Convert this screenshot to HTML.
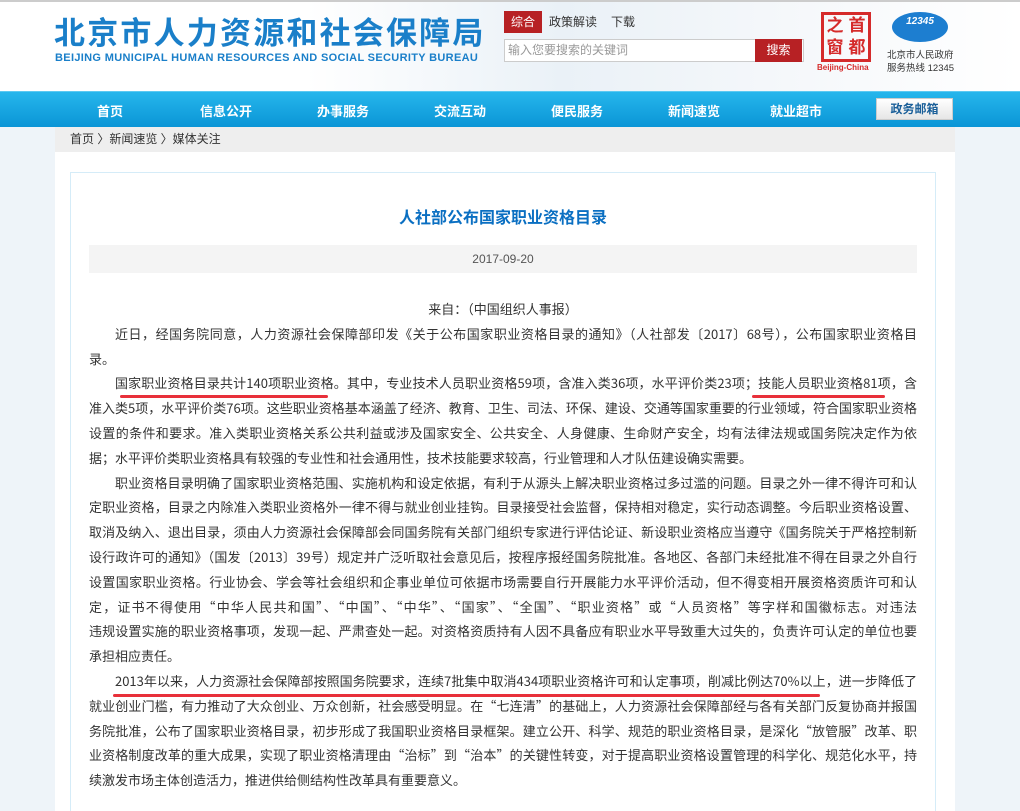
<!DOCTYPE html>
<html><head><meta charset="utf-8">
<style>
*{margin:0;padding:0;box-sizing:border-box}
html,body{width:1020px;height:811px;overflow:hidden}
body{background:#eef4f9;font-family:"Liberation Sans","Noto Sans CJK SC",sans-serif;color:#333;position:relative}
.hdr{height:91px;background:linear-gradient(90deg,#fff 0%,#fff 30%,#eaf1f7 55%,#f4f7fa 75%,#fff 100%);border-top:2px solid #ccc;position:relative}
.logo{position:absolute;left:54px;top:12px;font-size:31px;line-height:34px;font-weight:bold;color:#1a7fc9;letter-spacing:2.2px;font-family:"Noto Sans CJK SC",sans-serif;white-space:nowrap}
.logo-en{position:absolute;left:55px;top:50px;font-size:11px;font-weight:bold;color:#1a7fc9;letter-spacing:0.33px;white-space:nowrap}
.tabs{position:absolute;left:504px;top:9px;font-size:12px;display:flex;align-items:center}
.tabs span{padding:0 7px;height:22px;line-height:22px;color:#333}
.tabs .on{background:#b72124;color:#fff}
.search{position:absolute;left:504px;top:37px;width:300px;height:23px;border:1px solid #ccc;background:#fff;font-size:12px;color:#999;line-height:21px;padding-left:3px}
.sbtn{position:absolute;left:755px;top:37px;width:47px;height:23px;background:#b72124;color:#fff;font-size:12px;text-align:center;line-height:23px}
.bj{position:absolute;left:821px;top:10px;width:50px;height:50px;border:3px solid #d52b2b;color:#d52b2b;font-size:17px;font-weight:bold;display:grid;grid-template-columns:1fr 1fr;text-align:center;line-height:22px}
.bjt{position:absolute;left:817px;top:61px;font-size:8px;color:#d52b2b;font-weight:bold}
.ov{position:absolute;left:892px;top:10px;width:56px;height:30px;border-radius:50%;background:#1d7ed0;color:#fff;font-size:10px;font-style:italic;font-weight:bold;text-align:center;line-height:20px}
.ovt{position:absolute;left:887px;top:47px;font-size:9.5px;color:#333;line-height:13px}
.nav{position:absolute;top:91px;left:0;width:1020px;height:36px;background:linear-gradient(#26b6ec,#0a95d6);border-top:1px solid #5cc9f1}
.nav span{position:absolute;top:9px;color:#fff;font-size:13px;font-weight:bold}
.mail{position:absolute;left:876px;top:98px;width:77px;height:22px;background:linear-gradient(#fff,#e6e6e6);border:1px solid #ccc;color:#1a5f99;font-size:12px;font-weight:bold;text-align:center;line-height:20px}
.wrap{position:absolute;left:55px;top:127px;width:900px;height:684px;background:#fff;overflow:hidden}
.bc{height:25px;background:#eee;font-size:12px;line-height:25px;padding-left:15px;color:#333}
.box{position:absolute;left:15px;top:45px;width:866px;height:640px;border:1px solid #d5ecf8;border-bottom:none}
.title{position:absolute;top:31px;width:100%;text-align:center;color:#0a6fc2;font-size:16px;font-weight:bold}
.date{position:absolute;left:18px;top:72px;width:828px;height:28px;background:#f4f4f4;text-align:center;font-size:12px;line-height:28px;color:#555}
.txt{position:absolute;left:18px;top:124px;width:828px;font-size:13px;line-height:24.8px;font-family:"Noto Sans CJK SC",sans-serif}
.txt div{white-space:nowrap;text-align:justify;text-align-last:justify}
.txt div.i{padding-left:26px}
.txt div.e{text-align-last:left}
.ul{position:absolute;height:3px;background:#e8303a;border-radius:2px}
</style></head><body>
<div class="hdr">
<div class="logo">北京市人力资源和社会保障局</div>
<div class="logo-en">BEIJING MUNICIPAL HUMAN RESOURCES AND SOCIAL SECURITY BUREAU</div>
<div class="tabs"><span class="on">综合</span><span>政策解读</span><span>下载</span></div>
<div class="search">输入您要搜索的关键词</div>
<div class="sbtn">搜索</div>
<div class="bj"><span>之</span><span>首</span><span>窗</span><span>都</span></div>
<div class="bjt">Beijing-China</div>
<div class="ov">12345</div>
<div class="ovt">北京市人民政府<br>服务热线 12345</div>
</div>
<div class="nav">
<span style="left:97px">首页</span><span style="left:200px">信息公开</span><span style="left:317px">办事服务</span><span style="left:434px">交流互动</span><span style="left:551px">便民服务</span><span style="left:668px">新闻速览</span><span style="left:770px">就业超市</span>
</div>
<div class="mail">政务邮箱</div>
<div class="wrap">
<div class="bc">首页 〉新闻速览 〉媒体关注</div>
<div class="box">
<div class="title">人社部公布国家职业资格目录</div>
<div class="date">2017-09-20</div>
<div class="txt">
<div class="e" style="text-align:center;text-align-last:center">来自：（中国组织人事报）</div>
<div class="i">近日，经国务院同意，人力资源社会保障部印发《关于公布国家职业资格目录的通知》（人社部发〔2017〕68号），公布国家职业资格目</div>
<div class="e">录。</div>
<div class="i">国家职业资格目录共计140项职业资格。其中，专业技术人员职业资格59项，含准入类36项，水平评价类23项；技能人员职业资格81项，含</div>
<div>准入类5项，水平评价类76项。这些职业资格基本涵盖了经济、教育、卫生、司法、环保、建设、交通等国家重要的行业领域，符合国家职业资格</div>
<div>设置的条件和要求。准入类职业资格关系公共利益或涉及国家安全、公共安全、人身健康、生命财产安全，均有法律法规或国务院决定作为依</div>
<div class="e">据；水平评价类职业资格具有较强的专业性和社会通用性，技术技能要求较高，行业管理和人才队伍建设确实需要。</div>
<div class="i">职业资格目录明确了国家职业资格范围、实施机构和设定依据，有利于从源头上解决职业资格过多过滥的问题。目录之外一律不得许可和认</div>
<div>定职业资格，目录之内除准入类职业资格外一律不得与就业创业挂钩。目录接受社会监督，保持相对稳定，实行动态调整。今后职业资格设置、</div>
<div>取消及纳入、退出目录，须由人力资源社会保障部会同国务院有关部门组织专家进行评估论证、新设职业资格应当遵守《国务院关于严格控制新</div>
<div>设行政许可的通知》（国发〔2013〕39号）规定并广泛听取社会意见后，按程序报经国务院批准。各地区、各部门未经批准不得在目录之外自行</div>
<div>设置国家职业资格。行业协会、学会等社会组织和企事业单位可依据市场需要自行开展能力水平评价活动，但不得变相开展资格资质许可和认</div>
<div>定，证书不得使用“中华人民共和国”、“中国”、“中华”、“国家”、“全国”、“职业资格”或“人员资格”等字样和国徽标志。对违法</div>
<div>违规设置实施的职业资格事项，发现一起、严肃查处一起。对资格资质持有人因不具备应有职业水平导致重大过失的，负责许可认定的单位也要</div>
<div class="e">承担相应责任。</div>
<div class="i">2013年以来，人力资源社会保障部按照国务院要求，连续7批集中取消434项职业资格许可和认定事项，削减比例达70%以上，进一步降低了</div>
<div>就业创业门槛，有力推动了大众创业、万众创新，社会感受明显。在“七连清”的基础上，人力资源社会保障部经与各有关部门反复协商并报国</div>
<div>务院批准，公布了国家职业资格目录，初步形成了我国职业资格目录框架。建立公开、科学、规范的职业资格目录，是深化“放管服”改革、职</div>
<div>业资格制度改革的重大成果，实现了职业资格清理由“治标”到“治本”的关键性转变，对于提高职业资格设置管理的科学化、规范化水平，持</div>
<div class="e">续激发市场主体创造活力，推进供给侧结构性改革具有重要意义。</div>
</div>
</div>
</div>
<div class="ul" style="left:120px;top:395px;width:208px"></div>
<div class="ul" style="left:752px;top:395px;width:133px"></div>
<div class="ul" style="left:113px;top:694px;width:707px"></div>
</body></html>
